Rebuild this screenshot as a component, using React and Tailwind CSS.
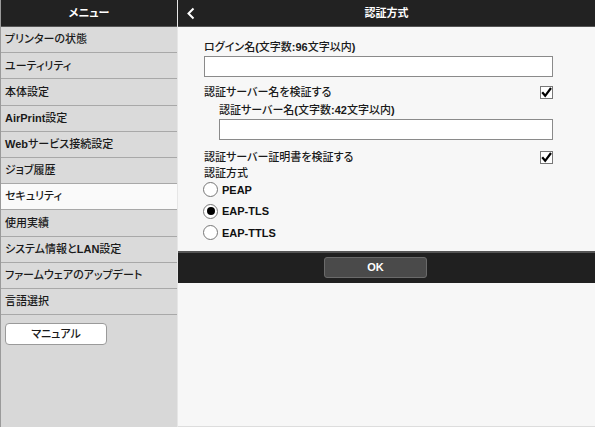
import React from "react";

const menu = [
  "プリンターの状態",
  "ユーティリティ",
  "本体設定",
  "AirPrint設定",
  "Webサービス接続設定",
  "ジョブ履歴",
  "セキュリティ",
  "使用実績",
  "システム情報とLAN設定",
  "ファームウェアのアップデート",
  "言語選択",
];

// latin runs are drawn bold, like the printer's web UI does
function T({ children }) {
  const parts = String(children).split(/([\x20-\x7e]+)/);
  return (
    <>
      {parts.map((p, i) =>
        /^[\x20-\x7e]+$/.test(p) ? (
          <span key={i} className="font-bold">{p}</span>
        ) : (
          <span key={i}>{p}</span>
        )
      )}
    </>
  );
}

function Check() {
  return (
    <div className="w-[13px] h-[13px] border border-[#777] bg-white flex items-center justify-center">
      <svg width="11" height="11" viewBox="0 0 11 11">
        <path d="M1.2 5.2 L4.2 8.8 L10 1" fill="none" stroke="#000" strokeWidth="2.2" />
      </svg>
    </div>
  );
}

function Radio({ label, on }) {
  return (
    <div className="h-[21.5px] flex items-center gap-[4px] -ml-[1px]">
      <div className="w-[15px] h-[15px] rounded-full border border-[#777] bg-white flex items-center justify-center">
        {on && <div className="w-[8px] h-[8px] rounded-full bg-black" />}
      </div>
      <span className="font-bold text-[#111]">{label}</span>
    </div>
  );
}

export default function App() {
  return (
    <div className="w-[595px] h-[427px] flex text-[11px] font-medium text-[#1a1a1a] overflow-hidden font-['Liberation_Sans','Noto_Sans_CJK_JP',sans-serif] [font-feature-settings:'palt']">
      {/* sidebar */}
      <div className="w-[178px] h-full flex flex-col bg-[#d8d8d8] border-l border-[#9a9a9a] border-r border-r-[#e6e6e6]">
        <div className="h-[27px] shrink-0 bg-[#222] border-b border-[#555] flex items-center justify-center text-white font-bold">
          メニュー
        </div>
        {menu.map((m) => (
          <div
            key={m}
            className={`h-[26.2px] shrink-0 flex items-center pl-[4px] border-b border-[#a8a8a8] ${
              m === "セキュリティ" ? "bg-[#fafafa]" : "bg-[#dadada]"
            }`}
          >
            <T>{m}</T>
          </div>
        ))}
        <div className="pt-[8px] pl-[4px]">
          <div className="w-[102px] h-[22px] bg-white border border-[#9a9a9a] rounded-[4px] flex items-center justify-center">
            マニュアル
          </div>
        </div>
      </div>

      {/* content */}
      <div className="flex-1 h-full flex flex-col bg-[#f7f7f7] border-b border-[#ddd]">
        <div className="h-[27px] shrink-0 bg-[#222] border-b border-[#555] flex items-center relative">
          <svg className="absolute left-[8px] top-[7px]" width="10" height="13" viewBox="0 0 10 13">
            <path d="M7.5 1.5 L2.5 6.5 L7.5 11.5" fill="none" stroke="#fff" strokeWidth="2" />
          </svg>
          <div className="flex-1 text-center text-white font-bold">認証方式</div>
        </div>

        <div className="pl-[26px] pr-[42px] pt-[13px] pb-[7px]">
          <div className="h-[15px] flex items-center"><T>ログイン名(文字数:96文字以内)</T></div>
          <div className="h-[21px] mt-[1px] bg-white border border-[#8a8a8a]" />

          <div className="h-[16px] mt-[7px] flex items-center justify-between">
            <span>認証サーバー名を検証する</span>
            <Check />
          </div>
          <div className="pl-[15px]">
            <div className="h-[15px] mt-[3px] flex items-center"><T>認証サーバー名(文字数:42文字以内)</T></div>
            <div className="h-[21px] mt-[1px] bg-white border border-[#8a8a8a]" />
          </div>

          <div className="h-[16px] mt-[9px] flex items-center justify-between">
            <span>認証サーバー証明書を検証する</span>
            <Check />
          </div>
          <div className="h-[12px] mt-[2px] flex items-center">認証方式</div>
          <Radio label="PEAP" />
          <Radio label="EAP-TLS" on />
          <Radio label="EAP-TTLS" />
        </div>

        <div className="h-[32px] shrink-0 bg-[#202020] border-t-2 border-[#555] flex items-center justify-center pr-[22px]">
          <div className="w-[103px] h-[21px] bg-[#4a4a4a] border border-[#6a6a6a] rounded-[3px] flex items-center justify-center text-white font-bold">
            OK
          </div>
        </div>
      </div>
    </div>
  );
}
